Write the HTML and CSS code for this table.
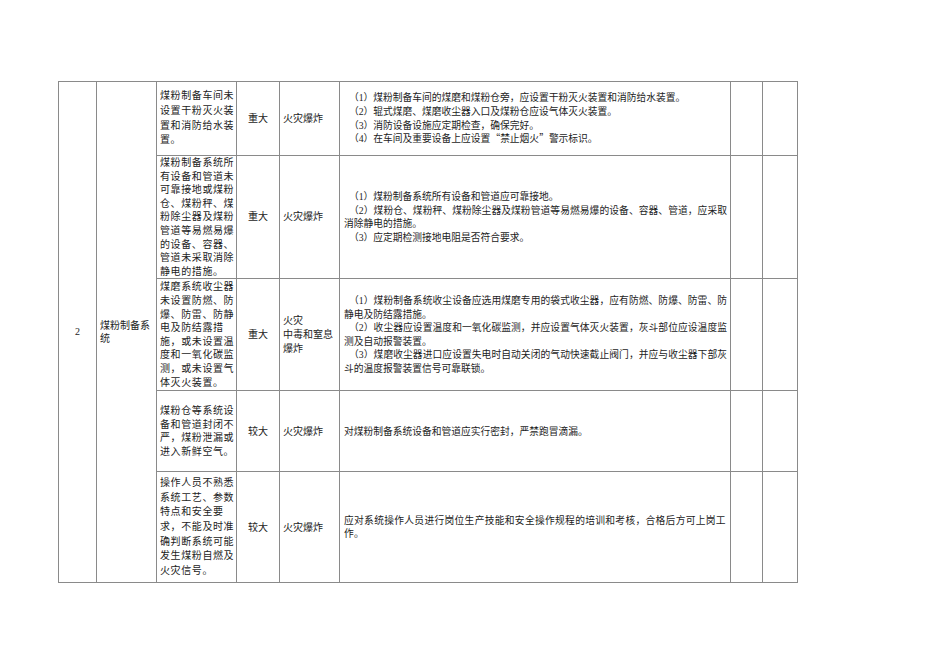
FILE: index.html
```html
<!DOCTYPE html>
<html lang="zh-CN">
<head>
<meta charset="utf-8">
<title>煤粉制备系统</title>
<link rel="stylesheet" href="styles.css">
</head>
<body>
<div class="page">
<table class="sheet">
  <colgroup>
    <col class="c-no"><col class="c-sys"><col class="c-haz"><col class="c-lvl"><col class="c-con"><col class="c-mea"><col class="c-e1"><col class="c-e2">
  </colgroup>
  <tbody>
    <tr class="r1">
      <td class="no" rowspan="5">2</td>
      <td class="sys" rowspan="5">煤粉制备系<br>统</td>
      <td class="haz lh15">煤粉制备车间未<br>设置干粉灭火装<br>置和消防给水装<br>置。</td>
      <td class="lvl">重大</td>
      <td class="con">火灾爆炸</td>
      <td class="mea">
        <span class="ln p">（1）煤粉制备车间的煤磨和煤粉仓旁，应设置干粉灭火装置和消防给水装置。</span>
        <span class="ln p">（2）辊式煤磨、煤磨收尘器入口及煤粉仓应设气体灭火装置。</span>
        <span class="ln p">（3）消防设备设施应定期检查，确保完好。</span>
        <span class="ln p">（4）在车间及重要设备上应设置<span class="q">“</span>禁止烟火<span class="q">”</span>警示标识。</span>
      </td>
      <td></td>
      <td></td>
    </tr>
    <tr class="r2">
      <td class="haz">煤粉制备系统所<br>有设备和管道未<br>可靠接地或煤粉<br>仓、煤粉秤、煤<br>粉除尘器及煤粉<br>管道等易燃易爆<br>的设备、容器、<br>管道未采取消除<br>静电的措施。</td>
      <td class="lvl">重大</td>
      <td class="con">火灾爆炸</td>
      <td class="mea">
        <span class="ln p">（1）煤粉制备系统所有设备和管道应可靠接地。</span>
        <span class="ln p j">（2）煤粉仓、煤粉秤、煤粉除尘器及煤粉管道等易燃易爆的设备、容器、管道，应采取</span>
        <span class="ln">消除静电的措施。</span>
        <span class="ln p">（3）应定期检测接地电阻是否符合要求。</span>
      </td>
      <td></td>
      <td></td>
    </tr>
    <tr class="r3">
      <td class="haz">煤磨系统收尘器<br>未设置防燃、防<br>爆、防雷、防静<br>电及防结露措<br>施，或未设置温<br>度和一氧化碳监<br>测，或未设置气<br>体灭火装置。</td>
      <td class="lvl">重大</td>
      <td class="con">火灾<br>中毒和窒息<br>爆炸</td>
      <td class="mea">
        <span class="ln p j">（1）煤粉制备系统收尘设备应选用煤磨专用的袋式收尘器，应有防燃、防爆、防雷、防</span>
        <span class="ln">静电及防结露措施。</span>
        <span class="ln p j">（2）收尘器应设置温度和一氧化碳监测，并应设置气体灭火装置，灰斗部位应设温度监</span>
        <span class="ln">测及自动报警装置。</span>
        <span class="ln p j">（3）煤磨收尘器进口应设置失电时自动关闭的气动快速截止阀门，并应与收尘器下部灰</span>
        <span class="ln">斗的温度报警装置信号可靠联锁。</span>
      </td>
      <td></td>
      <td></td>
    </tr>
    <tr class="r4">
      <td class="haz">煤粉仓等系统设<br>备和管道封闭不<br>严，煤粉泄漏或<br>进入新鲜空气。</td>
      <td class="lvl">较大</td>
      <td class="con">火灾爆炸</td>
      <td class="mea">
        <span class="ln">对煤粉制备系统设备和管道应实行密封，严禁跑冒滴漏。</span>
      </td>
      <td></td>
      <td></td>
    </tr>
    <tr class="r5">
      <td class="haz lh15">操作人员不熟悉<br>系统工艺、参数<br>特点和安全要<br>求，不能及时准<br>确判断系统可能<br>发生煤粉自燃及<br>火灾信号。</td>
      <td class="lvl">较大</td>
      <td class="con">火灾爆炸</td>
      <td class="mea">
        <span class="ln ls">应对系统操作人员进行岗位生产技能和安全操作规程的培训和考核，合格后方可上岗工</span>
        <span class="ln ls">作。</span>
      </td>
      <td></td>
      <td></td>
    </tr>
  </tbody>
</table>
</div>
</body>
</html>
```

FILE: styles.css
```css
html, body {
  margin: 0;
  padding: 0;
  background: #ffffff;
}

body {
  font-family: "Liberation Serif", "Noto Sans CJK SC", serif;
  font-size: 10px;
  color: #1c1c1c;
}

.page {
  padding: 81px 0 0 58px;
}

.sheet {
  border-collapse: collapse;
  table-layout: fixed;
  width: 740px;
}

.sheet td {
  border: 1px solid #8a8a8a;
  padding: 0 2px 0 3px;
  vertical-align: middle;
  line-height: 13.6px;
  white-space: nowrap;
  overflow: visible;
}

.c-no { width: 38px; }
.c-sys { width: 60px; }
.c-haz { width: 80px; }
.c-lvl { width: 43px; }
.c-con { width: 60px; }
.c-mea { width: 391px; }
.c-e1 { width: 32px; }
.c-e2 { width: 35px; }

.r1 { height: 74px; }
.r2 { height: 123px; }
.r3 { height: 112px; }
.r4 { height: 81px; }
.r5 { height: 111px; }

.sheet td.no {
  text-align: center;
  padding: 0;
}

.sys {
  text-align: left;
}

.haz {
  letter-spacing: 0.6px;
  line-height: 13.6px;
}

.sheet td.haz.lh15 {
  line-height: 14.6px;
}

.sheet td.lvl {
  text-align: center;
  padding: 0;
}

.con {
  text-align: left;
}

.sheet td.mea {
  font-size: 9.75px;
  padding: 0 3px 0 4px;
  line-height: 13.6px;
}

.ln {
  display: block;
  white-space: nowrap;
}

.ln.p {
  text-indent: 5px;
}

.ln.j {
  text-align: justify;
  text-align-last: justify;
}

.ln.ls {
  letter-spacing: 0.3px;
}

.q {
  font-family: "Noto Sans CJK SC", sans-serif;
}
```
